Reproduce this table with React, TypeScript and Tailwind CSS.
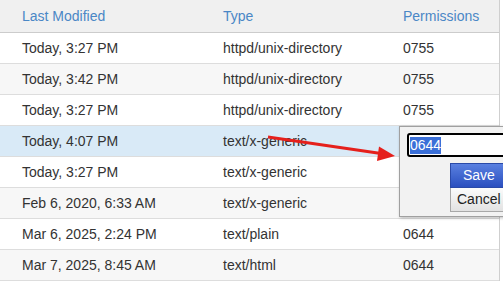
import React from 'react';

type Row = {
  modified: string;
  type: string;
  perms: string;
};

const rows: Row[] = [
  { modified: 'Today, 3:27 PM', type: 'httpd/unix-directory', perms: '0755' },
  { modified: 'Today, 3:42 PM', type: 'httpd/unix-directory', perms: '0755' },
  { modified: 'Today, 3:27 PM', type: 'httpd/unix-directory', perms: '0755' },
  { modified: 'Today, 4:07 PM', type: 'text/x-generic', perms: '' },
  { modified: 'Today, 3:27 PM', type: 'text/x-generic', perms: '' },
  { modified: 'Feb 6, 2020, 6:33 AM', type: 'text/x-generic', perms: '' },
  { modified: 'Mar 6, 2025, 2:24 PM', type: 'text/plain', perms: '0644' },
  { modified: 'Mar 7, 2025, 8:45 AM', type: 'text/html', perms: '0644' },
];

const rowBg = (i: number) => {
  if (i === 3) return 'bg-[#d9eaf7]';
  return i % 2 === 1 ? 'bg-[#f7f7f7]' : 'bg-white';
};

const App = () => {
  return (
    <div
      className="relative w-[503px] h-[284px] overflow-hidden bg-white text-[14px] text-[#333]"
      style={{ fontFamily: '"Liberation Sans", Arial, sans-serif' }}
    >
      <div className="w-[500px] border-r border-[#cfcfcf]">
        <div className="h-[33px] pl-[22px] grid grid-cols-[201px_180px_1fr] items-center bg-[#f0f0f0] border-b border-[#cccccc] text-[#4a87c6]">
          <span>Last Modified</span>
          <span>Type</span>
          <span>Permissions</span>
        </div>
        {rows.map((row, index) => (
          <div
            key={index}
            className={`h-[31px] pl-[22px] grid grid-cols-[201px_180px_1fr] items-center border-b border-[#dddddd] ${rowBg(index)}`}
          >
            <span>{row.modified}</span>
            <span>{row.type}</span>
            <span>{row.perms}</span>
          </div>
        ))}
      </div>

      {/* arrow pointing at the edit box */}
      <svg className="absolute left-0 top-0 pointer-events-none" width="503" height="284">
        <line x1="268" y1="137" x2="381" y2="153.5" stroke="#e5201c" strokeWidth="3" />
        <polygon points="395,156 379,146.5 377,161" fill="#e5201c" />
      </svg>

      {/* permissions editor popup */}
      <div className="absolute left-[399px] top-[126px] w-[130px] h-[91px] bg-[#f2f2f2] border border-[#a0a0a0] shadow-[1px_1px_3px_rgba(0,0,0,0.25)] pt-[6px] pl-[7px]">
        <div className="w-[110px] h-[24px] border-2 border-black rounded-[3px] bg-white flex items-center pl-[1px] text-[14px] text-[#222]">
          <span className="bg-[#3a6fd8] text-white leading-[17px]">0644</span>
        </div>
        <div className="ml-[43px] mt-[6px] flex flex-col">
          <div className="h-[25px] w-[80px] flex items-center pl-[12px] text-[14px] text-white border border-[#2a4aa8] bg-gradient-to-b from-[#5a80e0] to-[#2b4fbf]">
            Save
          </div>
          <div className="h-[24px] w-[80px] flex items-center pl-[6px] text-[14px] text-[#222] border border-[#a8a8a8] border-t-0 bg-gradient-to-b from-[#fbfbfb] to-[#e2e2e2]">
            Cancel
          </div>
        </div>
      </div>
    </div>
  );
};

export default App;
